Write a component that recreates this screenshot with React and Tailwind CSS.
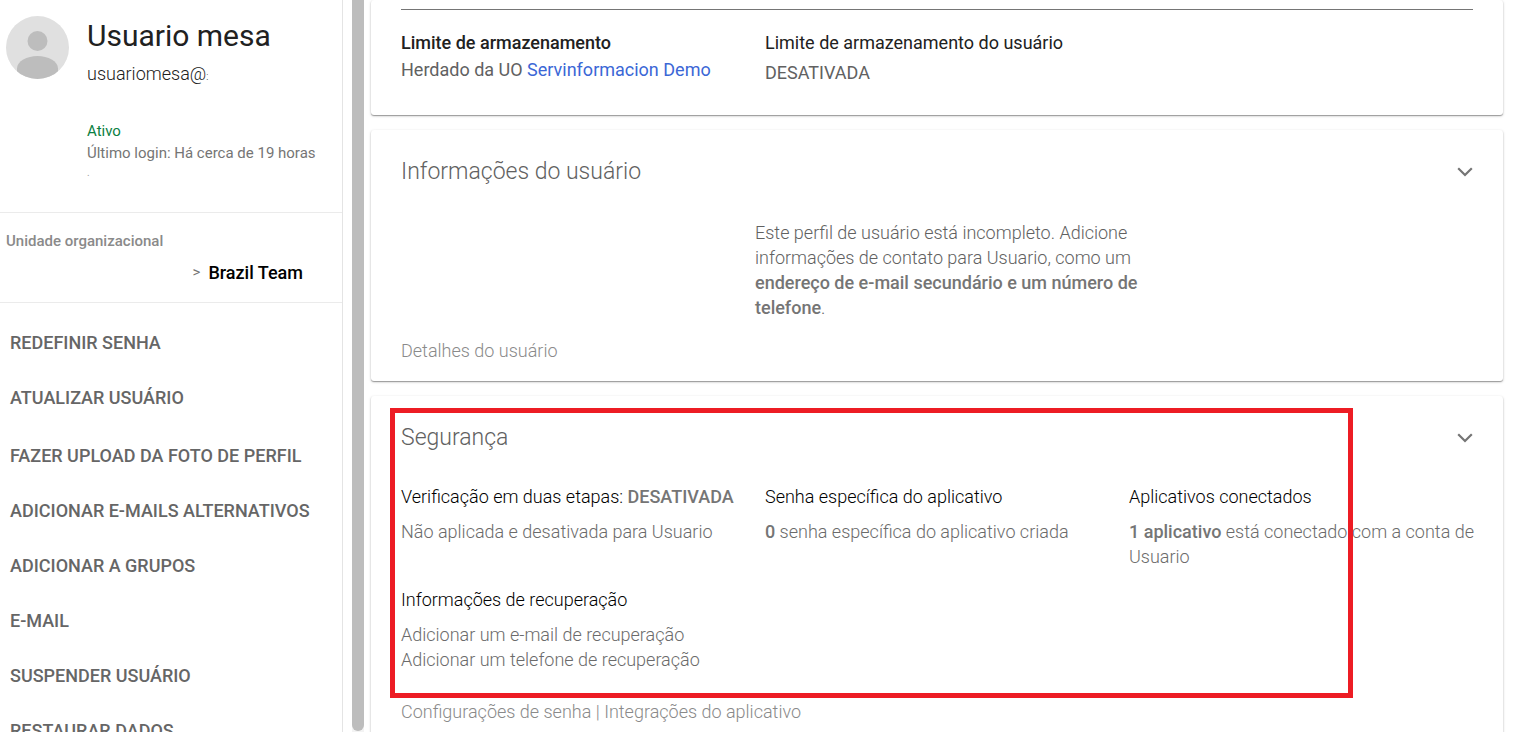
import React from "react";

const FIRST_ACTIONS = ["Redefinir senha", "Atualizar usuário"];

const MORE_ACTIONS = [
  "Fazer upload da foto de perfil",
  "Adicionar e-mails alternativos",
  "Adicionar a grupos",
  "E-mail",
  "Suspender usuário",
  "Restaurar dados",
];

const Avatar = () => (
  <svg viewBox="0 0 63 63" className="size-[63px] shrink-0" aria-hidden="true">
    <defs>
      <clipPath id="avatar-clip">
        <circle cx="31.5" cy="31.5" r="31.5" />
      </clipPath>
    </defs>
    <g clipPath="url(#avatar-clip)">
      <rect width="63" height="63" fill="#e0e0e0" />
      <circle cx="31.5" cy="25" r="10" fill="#bdbdbd" />
      <path d="M11 63V52.500C11 45 21 40 31.500 40S52 45 52 52.500V63Z" fill="#bdbdbd" />
    </g>
  </svg>
);

const ActionList = ({ items }) => (
  <ul>
    {items.map((label) => (
      <li key={label}>
        <button
          type="button"
          className="flex h-[55px] w-full items-center px-2.5 text-left text-[18px] font-medium uppercase text-[#666666]"
        >
          {label}
        </button>
      </li>
    ))}
  </ul>
);

const Card = ({ className = "", children }) => (
  <section
    className={`relative rounded-[3px] bg-white px-[30px] shadow-[0_1px_1px_rgba(0,0,0,0.3),0_1px_3px_rgba(0,0,0,0.2)] ${className}`}
  >
    {children}
  </section>
);

const CardHeader = ({ title }) => (
  <header className="flex items-center justify-between">
    <h2 className="text-[23px] font-light leading-[30px] text-[#616161]">{title}</h2>
    <button type="button" aria-label={`Expandir ${title}`}>
      <svg viewBox="0 0 16 10" className="h-[10px] w-4" fill="none" stroke="#757575" strokeWidth="2.2">
        <path d="M1.200 1.200 8 8 14.800 1.200" />
      </svg>
    </button>
  </header>
);

const Block = ({ title, children }) => (
  <div>
    <h3 className="mb-2.5 text-[18px] font-light leading-[25px] text-black">{title}</h3>
    <div className="text-[18px] font-light leading-[25px] text-[#6b6b6b]">{children}</div>
  </div>
);

function Sidebar() {
  return (
    <aside className="w-[343px] shrink-0 border-r border-[#e4e4e4]">
      <div className="flex h-[213px] gap-[18px] border-b border-[#ebebeb] pl-1.5 pt-4">
        <Avatar />
        <div>
          <h1 className="text-[30px] leading-10 text-[#212121]">Usuario mesa</h1>
          <p className="mt-[5px] text-[18px] font-light leading-[25px] text-[#212121]">
            usuariomesa@<span className="text-[10px]">:</span>
          </p>
          <p className="mt-[31px] text-[15px] leading-[22px] text-[#0b8043]">Ativo</p>
          <p className="text-[15px] leading-[22px] text-[#757575]">Último login: Há cerca de 19 horas</p>
          <p className="text-[10px] leading-[18px] text-[#9e9e9e]">.</p>
        </div>
      </div>

      <div className="h-[90px] border-b border-[#ebebeb] pl-1.5 pt-[17px]">
        <p className="text-[15px] font-medium leading-[22px] text-[#8a8a8a]">Unidade organizacional</p>
        <p className="mt-2 flex items-center justify-end gap-2 pr-[39px] leading-[25px]">
          <span className="text-[15px] text-[#757575]">&gt;</span>
          <span className="text-[18px] font-medium text-black">Brazil Team</span>
        </p>
      </div>

      <nav className="flex flex-col gap-[3px] pt-3">
        <ActionList items={FIRST_ACTIONS} />
        <ActionList items={MORE_ACTIONS} />
      </nav>
    </aside>
  );
}

export default function App() {
  return (
    <div className="flex h-screen overflow-hidden bg-white font-['Roboto',sans-serif]">
      <Sidebar />

      {/* scroll thumb of the side panel */}
      <div className="ml-[9px] w-3 shrink-0 bg-[#f3f3f3] pb-px">
        <div className="h-full rounded-b-md bg-[#bdbdbd]" />
      </div>

      <main className="ml-[7px] mr-[23px] flex min-w-0 flex-1 flex-col gap-[15px]">
        <Card className="shrink-0 pb-[30px] pt-[9px]">
          <div className="border-t border-[#757575]" />
          <div className="grid grid-cols-3 gap-5 pt-5 text-[18px] text-[#616161]">
            <div>
              <h3 className="font-medium leading-[25px] text-[#212121]">Limite de armazenamento</h3>
              <p className="mt-0.5 leading-[25px]">
                Herdado da UO{" "}
                <a href="#unidade" className="text-[#3b67d6]">
                  Servinformacion Demo
                </a>
              </p>
            </div>
            <div>
              <h3 className="leading-[25px] text-[#212121]">Limite de armazenamento do usuário</h3>
              <p className="mt-[5px] leading-[25px]">DESATIVADA</p>
            </div>
          </div>
        </Card>

        <Card className="shrink-0 pb-[18px] pt-[27px]">
          <CardHeader title="Informações do usuário" />
          <p className="mx-auto mt-[33px] w-[364px] whitespace-nowrap text-[18px] font-light leading-[25px] text-[#616161]">
            Este perfil de usuário está incompleto. Adicione
            <br />
            informações de contato para Usuario, como um
            <br />
            <strong className="font-medium text-[#757575]">
              endereço de e-mail secundário e um número de
              <br />
              telefone
            </strong>
            .
          </p>
          <a href="#detalhes" className="mt-[18px] block text-[18px] font-light leading-[25px] text-[#8a8a8a]">
            Detalhes do usuário
          </a>
        </Card>

        <Card className="shrink-0 pb-5 pt-[27px]">
          <CardHeader title="Segurança" />
          <div className="mt-[31px] grid grid-cols-3 gap-x-5 gap-y-[18px]">
            <Block
              title={
                <>
                  Verificação em duas etapas: <strong className="font-medium text-[#757575]">DESATIVADA</strong>
                </>
              }
            >
              Não aplicada e desativada para Usuario
            </Block>
            <Block title="Senha específica do aplicativo">
              <strong className="font-medium text-[#757575]">0</strong> senha específica do aplicativo criada
            </Block>
            <Block title="Aplicativos conectados">
              <p className="whitespace-nowrap">
                <strong className="font-medium text-[#757575]">1 aplicativo</strong> está conectado com a conta de
                <br />
                Usuario
              </p>
            </Block>
            <Block title="Informações de recuperação">
              <p>Adicionar um e-mail de recuperação</p>
              <p>Adicionar um telefone de recuperação</p>
            </Block>
          </div>
          <p className="mt-[27px] text-[18px] font-light leading-[25px] text-[#8a8a8a]">
            <a href="#senha">Configurações de senha</a> | <a href="#integracoes">Integrações do aplicativo</a>
          </p>

          {/* red highlight drawn over the section */}
          <div className="pointer-events-none absolute bottom-[46px] left-[19px] right-[150px] top-3 border-[5px] border-[#ed1c24]" />
        </Card>
      </main>
    </div>
  );
}
